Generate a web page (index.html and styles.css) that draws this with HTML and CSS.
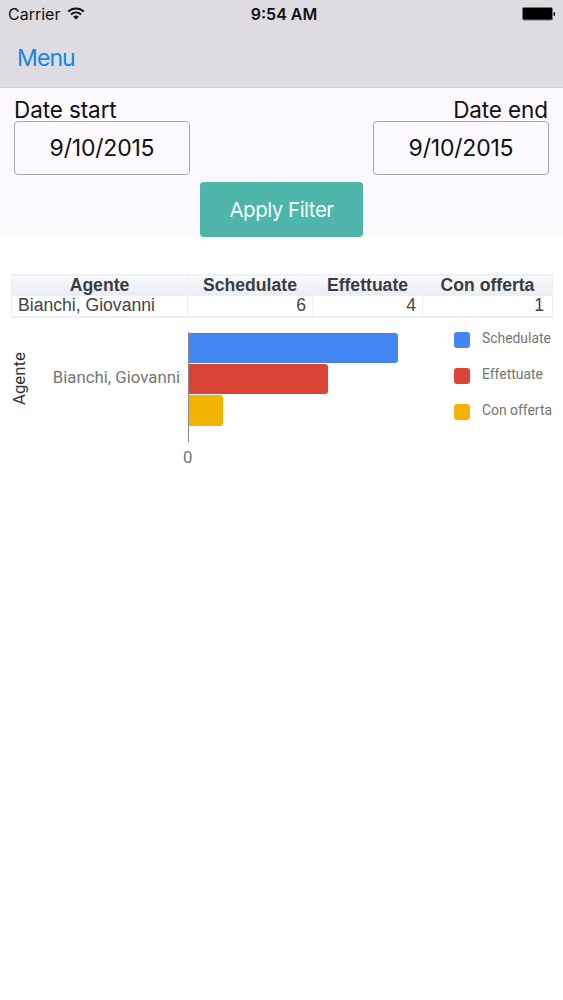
FILE: index.html
```html
<!DOCTYPE html>
<html lang="it">
<head>
  <meta charset="UTF-8" />
  <meta name="viewport" content="width=device-width, initial-scale=1.0" />
  <title>Report</title>
  <link rel="stylesheet" href="styles.css">
</head>
<body>
  <header class="header">
    <div class="status-bar">
      <div class="status-left">
        <span class="carrier">Carrier</span>
        <svg class="wifi" width="18" height="13" viewBox="0 0 18 13">
          <path d="M1.2 4.6 C5.6 0.4 12.4 0.4 16.8 4.6" fill="none" stroke="#111" stroke-width="2"/>
          <path d="M4 7.5 C6.9 4.9 11.1 4.9 14 7.5" fill="none" stroke="#111" stroke-width="2"/>
          <path d="M9 12.6 L6.1 9.7 C7.7 8.2 10.3 8.2 11.9 9.7 Z" fill="#111"/>
        </svg>
      </div>
      <span class="time">9:54 AM</span>
      <div class="status-right">
        <svg class="battery" width="34" height="14" viewBox="0 0 34 14">
          <rect x="1.5" y="0.5" width="30" height="12.5" rx="1.5" fill="#000" stroke="#77757a"/>
          <path d="M32.6 5 h0.4 a1 1 0 0 1 1 1 v2 a1 1 0 0 1 -1 1 h-0.4 z" fill="#000"/>
        </svg>
      </div>
    </div>
    <nav class="nav">
      <a href="#" class="menu">Menu</a>
    </nav>
  </header>

  <!-- Date filter -->
  <section class="filter">
    <div class="dates">
      <div class="date-field">
        <span class="date-label">Date start</span>
        <div class="date-input">9/10/2015</div>
      </div>
      <div class="date-field date-field-end">
        <span class="date-label">Date end</span>
        <div class="date-input">9/10/2015</div>
      </div>
    </div>
    <button class="apply">Apply Filter</button>
  </section>

  <table class="report">
    <colgroup>
      <col class="col-agente"><col class="col-schedulate"><col class="col-effettuate"><col class="col-offerta">
    </colgroup>
    <thead>
      <tr><th>Agente</th><th>Schedulate</th><th>Effettuate</th><th>Con offerta</th></tr>
    </thead>
    <tbody>
      <tr><td>Bianchi, Giovanni</td><td class="num">6</td><td class="num">4</td><td class="num last">1</td></tr>
    </tbody>
  </table>

  <!-- Bar chart -->
  <section class="chart">
    <div class="axis-title">Agente</div>
    <div class="category">Bianchi, Giovanni</div>
    <div class="plot">
      <div class="bars">
        <div class="bar blue" style="width: 209px"></div>
        <div class="bar red" style="width: 139px"></div>
        <div class="bar yellow" style="width: 34px"></div>
      </div>
      <div class="tick">0</div>
    </div>
    <ul class="legend">
      <li><span class="swatch blue"></span><span class="legend-text">Schedulate</span></li>
      <li><span class="swatch red"></span><span class="legend-text">Effettuate</span></li>
      <li><span class="swatch yellow"></span><span class="legend-text">Con offerta</span></li>
    </ul>
  </section>
</body>
</html>
```
FILE: styles.css
```css
* {
  box-sizing: border-box;
}
body {
  margin: 0;
  background-color: #fff;
  color: #111;
  font-family: Inter, "Liberation Sans", sans-serif;
}

/* Header */
.header {
  height: 88px;
  background-color: #dedce0;
  border-bottom: 1px solid #d3d1d5;
}
.status-bar {
  display: grid;
  grid-template-columns: 1fr auto 1fr;
  align-items: center;
  height: 28px;
  padding: 0 8px;
  font-size: 16px;
}
.status-left {
  display: flex;
  align-items: center;
  gap: 7px;
}
.wifi {
  margin-top: -2px;
}
.time {
  margin-left: 5px;
  font-weight: 600;
}
.status-right {
  display: flex;
  justify-content: flex-end;
}
.nav {
  padding: 0 17px;
  line-height: 60px;
}
.menu {
  color: #1583f0;
  font-size: 23px;
  letter-spacing: -0.9px;
  text-decoration: none;
}

/* Filter */
.filter {
  height: 148px;
  padding: 8px 14px 0;
  background-color: #fbf9fd;
}
.dates {
  display: flex;
  justify-content: space-between;
}
.date-field {
  display: flex;
  flex-direction: column;
  width: 176px;
}
.date-field-end {
  text-align: right;
}
.date-field-end .date-label {
  padding-right: 1px;
}
.date-label {
  height: 25px;
  font-size: 22.5px;
  letter-spacing: -0.1px;
  line-height: 27px;
}
.date-input {
  height: 54px;
  border: 1px solid #aaa8ac;
  border-radius: 4px;
  font-size: 23px;
  letter-spacing: -0.2px;
  line-height: 53px;
  text-align: center;
}
.apply {
  display: block;
  width: 163px;
  height: 55px;
  margin: 7px 0 0 186px;
  padding: 0;
  border: none;
  border-radius: 4px;
  background-color: #4db5aa;
  color: #f4fffd;
  font-family: inherit;
  font-size: 20.5px;
  letter-spacing: -0.5px;
}

/* Table */
.report {
  width: 541px;
  margin: 38px 0 0 11px;
  border-collapse: collapse;
  table-layout: fixed;
  font-family: "Liberation Sans", Arial, sans-serif;
  font-size: 17.6px;
  color: #444;
}
.col-agente { width: 176px; }
.col-schedulate { width: 125px; }
.col-effettuate { width: 110px; }
.col-offerta { width: 130px; }
.report th,
.report td {
  height: 21px;
  padding: 0 6px;
  border: 1px solid #eeeff2;
  line-height: 20px;
}
.report th {
  padding: 0;
  background: linear-gradient(#f8f9fb, #e9edf5);
  color: #3c3c3e;
}
.report td {
  padding-bottom: 1px;
  border-bottom-width: 2px;
  line-height: 19px;
}
.report .num {
  text-align: right;
}
.report .last {
  padding-right: 8px;
}

/* Chart */
.chart {
  display: flex;
  align-items: flex-start;
  margin: 14px 0 0 10px;
  font-family: Roboto, sans-serif;
}
.axis-title {
  width: 18px;
  height: 94px;
  writing-mode: vertical-rl;
  transform: rotate(180deg);
  color: #333;
  font-size: 16.8px;
  line-height: 18px;
  text-align: center;
}
.category {
  width: 152px;
  line-height: 90px;
  color: #757575;
  font-size: 16.8px;
  text-align: right;
}
.plot {
  width: 266px;
  margin-left: 8px;
}
.bars {
  display: flex;
  flex-direction: column;
  gap: 1px;
  height: 110px;
  padding-top: 1px;
  border-left: 1px solid #8a8a8a;
}
.bar {
  height: 30.2px;
  border-radius: 0 3px 3px 0;
}
.blue { background-color: #4485f4; }
.red { background-color: #da4336; }
.yellow { background-color: #f2b400; }
.tick {
  width: 10px;
  margin: 5px 0 0 -5px;
  color: #757575;
  font-size: 16.8px;
  line-height: 20px;
}
.legend {
  display: flex;
  flex-direction: column;
  gap: 20px;
  margin: 0;
  padding: 0;
  list-style: none;
}
.legend li {
  display: flex;
  height: 16px;
}
.swatch {
  width: 16px;
  height: 16px;
  border-radius: 3px;
}
.legend-text {
  margin-left: 12px;
  color: #757575;
  font-size: 13.9px;
  line-height: 12px;
  white-space: nowrap;
}
```
